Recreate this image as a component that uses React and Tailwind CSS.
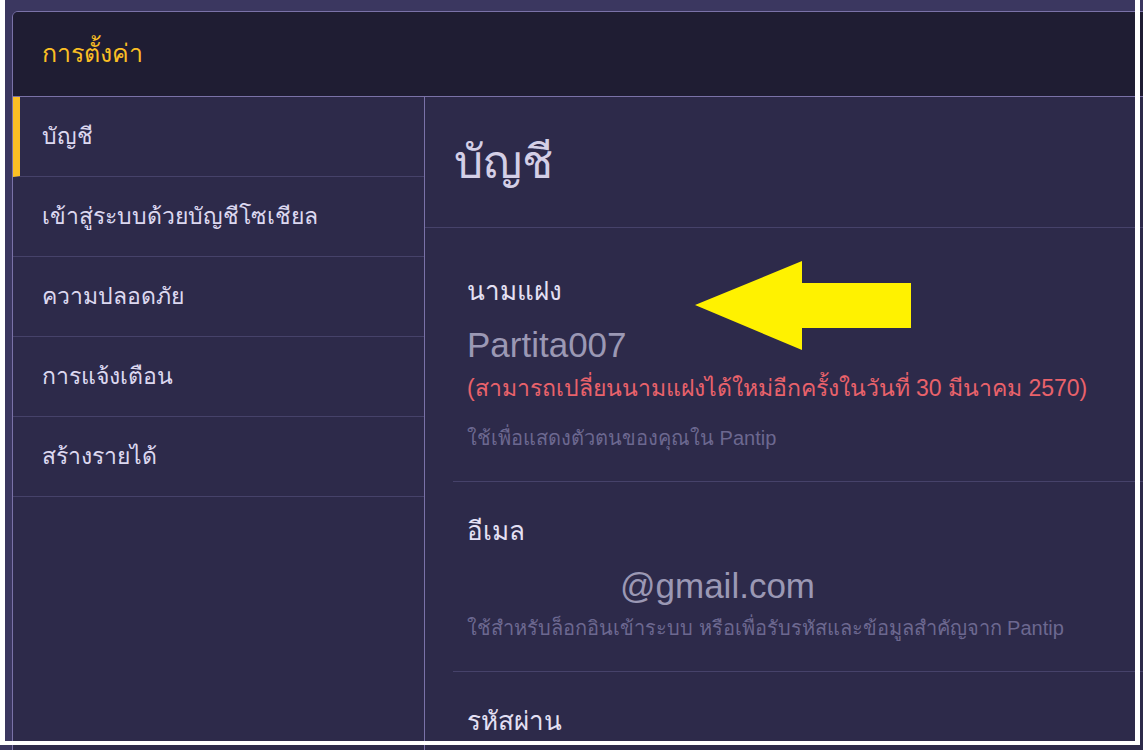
import React from 'react';

const menu = [
  { label: 'บัญชี', active: true },
  { label: 'เข้าสู่ระบบด้วยบัญชีโซเชียล' },
  { label: 'ความปลอดภัย' },
  { label: 'การแจ้งเตือน' },
  { label: 'สร้างรายได้' },
];

const font = { fontFamily: '"Liberation Sans", "Noto Sans", Tahoma, sans-serif' };

export default function App() {
  return (
    <div className="relative w-[1143px] h-[750px] overflow-hidden bg-[#3b3760]" style={font}>
      <div className="pl-[12px] pt-[11px]">
        <div className="w-[1160px] h-[760px] rounded-tl-md border border-[#7a72a8] bg-[#2d2a4a] overflow-hidden">
          {/* header */}
          <div className="h-[85px] bg-[#1f1d33] border-b border-[#7a72a8] flex items-center pl-[29px]">
            <h1 className="text-[25px] text-[#fbbf24]">การตั้งค่า</h1>
          </div>

          <div className="flex">
            {/* sidebar */}
            <div className="w-[412px] shrink-0 border-r border-[#7a72a8] h-[700px]">
              {menu.map((m) => (
                <div
                  key={m.label}
                  className={`h-[80px] border-b border-[#46426a] flex items-center text-[23px] text-[#dcd8f0] ${
                    m.active ? 'border-l-[7px] border-l-[#fbbf24] pl-[22px]' : 'pl-[29px]'
                  }`}
                >
                  {m.label}
                </div>
              ))}
            </div>

            {/* content */}
            <div className="flex-1">
              <div className="h-[131px] border-b border-[#46426a] flex items-center pl-[29px]">
                <h2 className="text-[46px] text-[#d4cfe6]">บัญชี</h2>
              </div>

              <div className="ml-[28px]">
                <div className="pl-[14px] pt-[49px] pb-[31px] border-b border-[#46426a]">
                  <div className="text-[26px] leading-[28px] text-[#e4e0f4]">นามแฝง</div>
                  <div className="mt-[20px] text-[35px] leading-[40px] text-[#9b98b4]">Partita007</div>
                  <div className="mt-[9px] text-[23px] leading-[28px] text-[#e9626b]">
                    (สามารถเปลี่ยนนามแฝงได้ใหม่อีกครั้งในวันที่ 30 มีนาคม 2570)
                  </div>
                  <div className="mt-[24px] text-[20px] leading-[24px] text-[#6c6890]">ใช้เพื่อแสดงตัวตนของคุณใน Pantip</div>
                </div>

                <div className="pl-[14px] pt-[35px] pb-[31px] border-b border-[#46426a]">
                  <div className="text-[26px] leading-[28px] text-[#e4e0f4]">อีเมล</div>
                  <div className="mt-[21px] pl-[153px] text-[35px] leading-[40px] text-[#9b98b4]">@gmail.com</div>
                  <div className="mt-[10px] text-[20px] leading-[24px] text-[#6c6890]">
                    ใช้สำหรับล็อกอินเข้าระบบ หรือเพื่อรับรหัสและข้อมูลสำคัญจาก Pantip
                  </div>
                </div>

                <div className="pl-[14px] pt-[35px]">
                  <div className="text-[26px] leading-[28px] text-[#e4e0f4]">รหัสผ่าน</div>
                </div>
              </div>
            </div>
          </div>
        </div>
      </div>

      {/* annotation arrow */}
      <svg className="absolute left-[694px] top-[260px]" width="218" height="92" viewBox="0 0 218 92">
        <polygon points="1,45 108,1 108,23 217,23 217,68 108,68 108,90" fill="#fff200" />
      </svg>

      {/* white frame of the crop */}
      <div className="absolute left-0 top-0 w-[5px] h-[745px] bg-white" />
      <div className="absolute left-[1135px] top-0 w-[5px] h-[745px] bg-white" />
      <div className="absolute left-0 top-[741px] w-[1140px] h-[4px] bg-white" />
    </div>
  );
}
